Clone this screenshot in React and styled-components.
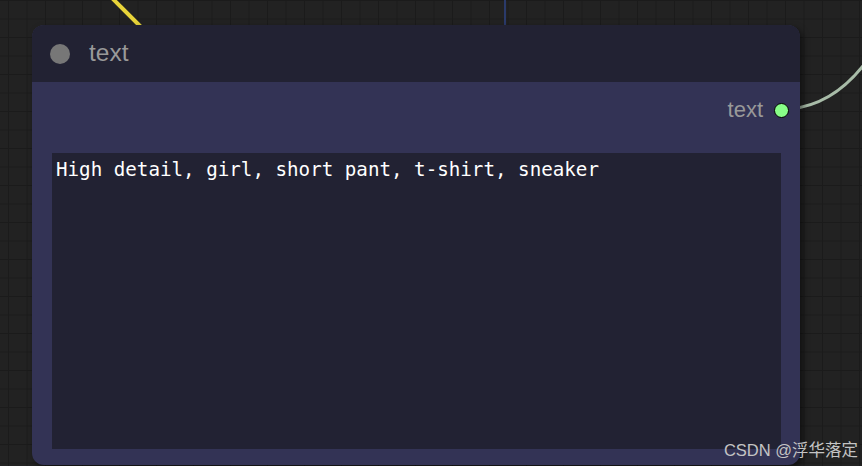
import React from "react";
import styled, { createGlobalStyle } from "styled-components";

const Global = createGlobalStyle`
  html, body { margin: 0; padding: 0; }
  body {
    width: 862px; height: 466px; overflow: hidden;
    background-color: #222222;
    background-image:
      linear-gradient(to right, #1b1b1b 1px, transparent 1px),
      linear-gradient(to bottom, #1b1b1b 1px, transparent 1px);
    background-size: 18.5px 18.5px;
    background-position: 8px 0px;
    font-family: "Liberation Sans", Arial, sans-serif;
  }
`;

const Canvas = styled.div`
  position: relative;
  width: 862px;
  height: 466px;
  overflow: hidden;
`;

const Wires = styled.svg`
  position: absolute;
  left: 0;
  top: 0;
  pointer-events: none;
`;

const Node = styled.div`
  position: absolute;
  left: 32px;
  top: 25px;
  width: 768px;
  height: 440px;
  border-radius: 12px;
  background: #333355;
  box-shadow: 3px 3px 6px rgba(0, 0, 0, 0.5);
  display: flex;
  flex-direction: column;
  overflow: hidden;
`;

const Header = styled.div`
  height: 57px;
  background: #222233;
  display: flex;
  align-items: center;
  padding-left: 18px;
  gap: 19px;
  flex-shrink: 0;
`;

const StatusDot = styled.span`
  width: 20px;
  height: 20px;
  border-radius: 50%;
  background: #777777;
`;

const Title = styled.span`
  color: #999999;
  font-size: 24.5px;
  line-height: 1;
  margin-top: -1px;
`;

const Body = styled.div`
  flex: 1;
  display: flex;
  flex-direction: column;
  padding: 0 19px 16px 20px;
`;

const OutputRow = styled.div`
  height: 56px;
  display: flex;
  align-items: center;
  justify-content: flex-end;
  gap: 11px;
  margin-right: -8px;
`;

const OutputLabel = styled.span`
  color: #999999;
  font-size: 22px;
  line-height: 1;
`;

const Slot = styled.span`
  width: 15px;
  height: 15px;
  border-radius: 50%;
  background: #88ff88;
  border: 1.5px solid #000;
  box-sizing: border-box;
`;

const TextArea = styled.textarea`
  margin-top: 15px;
  flex: 1;
  resize: none;
  border: none;
  outline: none;
  background: #222233;
  color: #ffffff;
  font-family: "DejaVu Sans Mono", "Liberation Mono", monospace;
  font-size: 19.2px;
  line-height: 1.2;
  padding: 5px 4px;
  box-sizing: border-box;
  overflow: hidden;
`;

const Watermark = styled.span`
  position: absolute;
  right: 4px;
  bottom: 5px;
  color: #c4c4c4;
  font-size: 16.5px;
  font-family: "Liberation Sans", "Noto Sans CJK SC", sans-serif;
`;

export default function App() {
  return (
    <>
      <Global />
      <Canvas>
        <Wires width="862" height="466">
          <line x1="112" y1="-2" x2="141" y2="27" stroke="#e8d43a" strokeWidth="4" />
          <line x1="505" y1="0" x2="505" y2="26" stroke="#2a3a6a" strokeWidth="2" />
          <path d="M 790 109 C 820 106, 845 90, 866 62" stroke="#a8bca8" strokeWidth="3" fill="none" />
        </Wires>
        <Node>
          <Header>
            <StatusDot />
            <Title>text</Title>
          </Header>
          <Body>
            <OutputRow>
              <OutputLabel>text</OutputLabel>
              <Slot />
            </OutputRow>
            <TextArea readOnly value="High detail, girl, short pant, t-shirt, sneaker" />
          </Body>
        </Node>
        <Watermark>CSDN @浮华落定</Watermark>
      </Canvas>
    </>
  );
}
